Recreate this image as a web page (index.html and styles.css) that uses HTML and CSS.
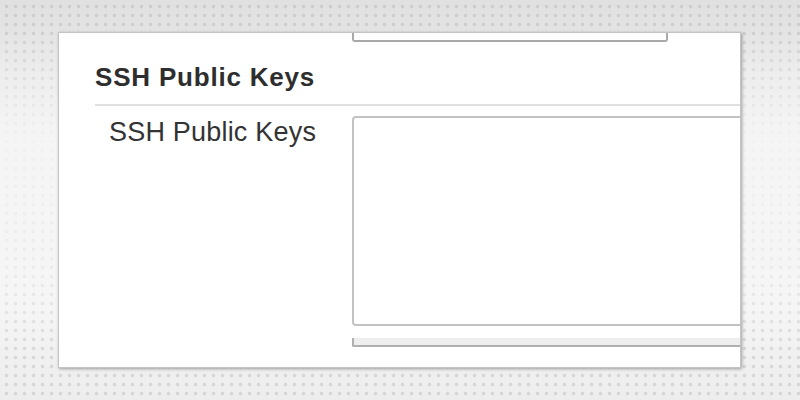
FILE: index.html
```html
<!DOCTYPE html>
<html>
<head>
<meta charset="utf-8">
<link rel="stylesheet" href="styles.css">
</head>
<body>
<div class="stage">
  <div class="card">
    <div class="prev-field"></div>
    <h2 class="section-title">SSH Public Keys</h2>
    <div class="row">
      <label class="row-label">SSH Public Keys</label>
      <div class="row-control">
        <div class="textarea"></div>
      </div>
    </div>
    <div class="next-field"></div>
  </div>
</div>
</body>
</html>
```
FILE: styles.css
```css
html, body {
  margin: 0;
  padding: 0;
}
body {
  width: 800px;
  height: 400px;
  overflow: hidden;
  font-family: "Liberation Sans", Arial, sans-serif;
  background-color: #f2f2f2;
  background-image:
    linear-gradient(180deg, rgba(236,236,236,0) 0%, rgba(246,246,246,0) 8%, rgba(246,246,246,0.85) 35%, rgba(246,246,246,0.6) 70%, rgba(240,240,240,0) 88%),
    radial-gradient(circle, rgba(165,165,165,0.32) 1.5px, transparent 2.2px),
    linear-gradient(180deg, #e0e0e0 0%, #e9e9e9 20%, #f3f3f3 50%, #f5f5f5 75%, #ededed 100%);
  background-size: 100% 100%, 9px 9px, 100% 100%;
  background-position: 0 0, 2px 2px, 0 0;
}
.stage {
  padding: 32px 0 0 58px;
}
.card {
  width: 681px;
  height: 334px;
  background: #ffffff;
  border: 1px solid #c4c4c4;
  box-shadow: 1px 1px 3px rgba(0,0,0,0.35);
  overflow: hidden;
  display: flex;
  flex-direction: column;
}
.prev-field {
  margin-left: 293px;
  width: 312px;
  height: 7px;
  border: 2px solid #a9a9a9;
  border-top: none;
  border-radius: 0 0 3px 3px;
  flex: none;
}
.section-title {
  margin: 20px 0 0 36px;
  padding: 0 0 12px 0;
  font-size: 26px;
  line-height: 30px;
  font-weight: bold;
  color: #2e2e2e;
  letter-spacing: 0.8px;
  border-bottom: 2px solid #e0e0e0;
}
.row {
  display: flex;
  margin-top: 10px;
}
.row-label {
  width: 293px;
  box-sizing: border-box;
  padding: 1px 0 0 50px;
  font-size: 27px;
  line-height: 30px;
  color: #333333;
  letter-spacing: 0.2px;
  flex: none;
}
.row-control {
  flex: 1;
}
.textarea {
  width: 420px;
  height: 210px;
  border: 2px solid #c2c2c2;
  border-radius: 4px;
  box-sizing: border-box;
  background: #ffffff;
}
.next-field {
  margin: 12px 0 0 293px;
  height: 7px;
  background: #eeeeee;
  border-left: 2px solid #b0b0b0;
  border-bottom: 2px solid #b0b0b0;
  border-radius: 0 0 0 2px;
}
```
